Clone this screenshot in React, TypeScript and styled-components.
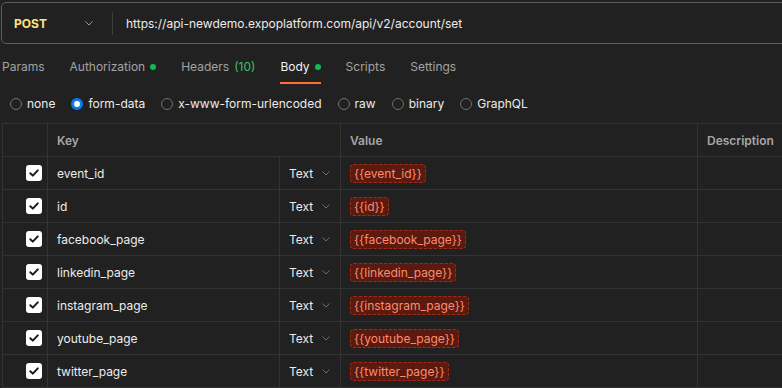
import React from "react";
import styled, { createGlobalStyle } from "styled-components";

const GlobalStyle = createGlobalStyle`
  html, body {
    margin: 0;
    padding: 0;
    background: #212121;
    overflow: hidden;
  }
  body {
    font-family: Inter, "Noto Sans", sans-serif;
    font-size: 12px;
    color: #e6e6e6;
    -webkit-font-smoothing: antialiased;
  }
`;

const rows = [
  "event_id",
  "id",
  "facebook_page",
  "linkedin_page",
  "instagram_page",
  "youtube_page",
  "twitter_page",
];

const bodyTypes = [
  "none",
  "form-data",
  "x-www-form-urlencoded",
  "raw",
  "binary",
  "GraphQL",
];

const Chevron = ({ color = "#8a8a8a" }: { color?: string }) => (
  <svg width="12" height="12" viewBox="0 0 12 12" fill="none">
    <path d="M2.5 4.5 L6 8 L9.5 4.5" stroke={color} strokeWidth="1" />
  </svg>
);

const Check = () => (
  <svg width="12" height="12" viewBox="0 0 12 12" fill="none">
    <path
      d="M2.3 6.2 L4.8 8.6 L9.8 3.4"
      stroke="#1a1a1a"
      strokeWidth="2"
      strokeLinecap="round"
      strokeLinejoin="round"
    />
  </svg>
);

const App = () => {
  return (
    <Page>
      <GlobalStyle />
      <UrlBar>
        <Method>
          <MethodName>POST</MethodName>
          <Chevron color="#9a9a9a" />
        </Method>
        <Divider />
        <UrlText>https://api-newdemo.expoplatform.com/api/v2/account/set</UrlText>
      </UrlBar>

      <Tabs>
        <Tab>Params</Tab>
        <Tab>
          Authorization <Dot />
        </Tab>
        <Tab>
          Headers <Count>(10)</Count>
        </Tab>
        <Tab active>
          Body <Dot />
        </Tab>
        <Tab>Scripts</Tab>
        <Tab>Settings</Tab>
      </Tabs>

      <Radios>
        {bodyTypes.map((t) => (
          <RadioLabel key={t}>
            <Radio checked={t === "form-data"} />
            {t}
          </RadioLabel>
        ))}
      </Radios>

      <Table>
        <HeadCell />
        <HeadCell span={2}>Key</HeadCell>
        <HeadCell>Value</HeadCell>
        <HeadCell>Description</HeadCell>
        {rows.map((name) => (
          <React.Fragment key={name}>
            <CheckCell>
              <CheckBox>
                <Check />
              </CheckBox>
            </CheckCell>
            <Cell>{name}</Cell>
            <TypeCell>
              Text <Chevron color="#6e6e6e" />
            </TypeCell>
            <Cell>
              <Variable>{`{{${name}}}`}</Variable>
            </Cell>
            <Cell />
          </React.Fragment>
        ))}
      </Table>
    </Page>
  );
};

export default App;

const Page = styled.div`
  width: 782px;
  height: 388px;
  overflow: hidden;
  padding-top: 2px;
  box-sizing: border-box;
`;

const UrlBar = styled.div`
  display: flex;
  align-items: center;
  height: 42px;
  margin-left: 1px;
  width: 800px;
  border: 1px solid #5c5c5c;
  border-radius: 5px;
  box-sizing: border-box;
`;

const Method = styled.div`
  display: flex;
  align-items: center;
  justify-content: space-between;
  width: 110px;
  padding: 0 17px 0 12px;
  box-sizing: border-box;
`;

const MethodName = styled.span`
  color: #ffe47e;
  font-weight: 700;
  font-size: 12px;
`;

const Divider = styled.div`
  width: 1px;
  height: 23px;
  background: #3d3d3d;
`;

const UrlText = styled.span`
  margin-left: 13px;
  color: #ececec;
`;

const Tabs = styled.div`
  display: flex;
  gap: 25px;
  height: 40px;
  padding-left: 2px;
  align-items: stretch;
  box-sizing: border-box;
`;

const Tab = styled.div<{ active?: boolean }>`
  display: flex;
  align-items: center;
  gap: 5px;
  color: ${({ active }) => (active ? "#f2f2f2" : "#a3a3a3")};
  border-bottom: 2px solid ${({ active }) => (active ? "#ff6c37" : "transparent")};
  box-sizing: border-box;
  padding-top: 7px;
`;

const Dot = styled.span`
  display: inline-block;
  width: 6px;
  height: 6px;
  border-radius: 50%;
  background: #0cbb52;
`;

const Count = styled.span`
  color: #3cc06a;
`;

const Radios = styled.div`
  display: flex;
  align-items: center;
  gap: 16px;
  height: 39px;
  padding-left: 10px;
  box-sizing: border-box;
`;

const RadioLabel = styled.label`
  display: flex;
  align-items: center;
  gap: 5px;
  color: #ececec;
`;

const Radio = styled.span<{ checked?: boolean }>`
  width: 12px;
  height: 12px;
  border-radius: 50%;
  box-sizing: border-box;
  border: ${({ checked }) => (checked ? "3px solid #0a7bf0" : "1px solid #6e6e6e")};
  background: ${({ checked }) => (checked ? "#ffffff" : "transparent")};
`;

const Table = styled.div`
  display: grid;
  grid-template-columns: 45px 232px 61px 357px 200px;
  grid-auto-rows: 33px;
  margin-left: 2px;
  border-top: 1px solid #333333;
  border-left: 1px solid #333333;
  width: max-content;
`;

const BaseCell = styled.div`
  display: flex;
  align-items: center;
  border-right: 1px solid #333333;
  border-bottom: 1px solid #333333;
  box-sizing: border-box;
  color: #ececec;
  padding-left: 9px;
  white-space: nowrap;
`;

const HeadCell = styled(BaseCell)<{ span?: number }>`
  grid-column: span ${({ span }) => span ?? 1};
  color: #a6a6a6;
  font-weight: 600;
`;

const Cell = styled(BaseCell)``;

const CheckCell = styled(BaseCell)`
  justify-content: flex-end;
  padding: 0 5px 0 0;
`;

const TypeCell = styled(BaseCell)`
  gap: 7px;
`;

const CheckBox = styled.span`
  display: flex;
  align-items: center;
  justify-content: center;
  width: 16px;
  height: 16px;
  border-radius: 3px;
  background: #ffffff;
`;

const Variable = styled.span`
  display: inline-block;
  padding: 1px 3px;
  border-radius: 4px;
  background: #5a1a0f;
  border: 1px dashed #9e2c18;
  color: #ff8b6e;
  line-height: 15px;
`;
